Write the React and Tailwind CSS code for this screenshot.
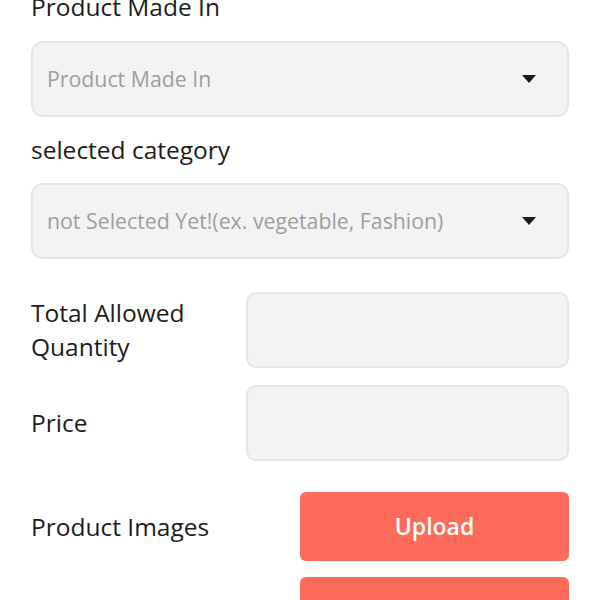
import React from "react";

function Caret() {
  return (
    <svg width="14" height="8" viewBox="0 0 14 8" className="shrink-0">
      <path d="M0 0 H14 L7 8 Z" fill="#1a1a1a" />
    </svg>
  );
}

function Select({ text }) {
  return (
    <div className="flex h-[76px] items-center justify-between rounded-[12px] border-2 border-[#e6e6e6] bg-[#f3f3f3] pl-[14px] pr-[31px]">
      <span className="text-[21.3px] text-[#9e9e9e]">{text}</span>
      <Caret />
    </div>
  );
}

export default function App() {
  return (
    <div
      className="min-h-[600px] bg-white px-[31px] text-[#1c1c1c]"
      style={{ fontFamily: '"Open Sans", "Noto Sans", sans-serif' }}
    >
      <div className="-mt-[10px] text-[24.5px] leading-[34px]">Product Made In</div>
      <div className="mt-[17px]">
        <Select text="Product Made In" />
      </div>
      <div className="mt-[16px] text-[24.5px] leading-[34px]">selected category</div>
      <div className="mt-[16px]">
        <Select text="not Selected Yet!(ex. vegetable, Fashion)" />
      </div>

      <div className="mt-[33px] flex items-center">
        <div className="w-[215px] text-[24.5px] leading-[34px]">
          Total Allowed
          <br />
          Quantity
        </div>
        <div className="h-[76px] flex-1 rounded-[10px] border-2 border-[#e6e6e6] bg-[#f3f3f3]" />
      </div>
      <div className="mt-[17px] flex items-center">
        <div className="w-[215px] text-[24.5px] leading-[34px]">Price</div>
        <div className="h-[76px] flex-1 rounded-[10px] border-2 border-[#e6e6e6] bg-[#f3f3f3]" />
      </div>

      <div className="mt-[31px] flex items-center">
        <div className="w-[269px] text-[24.5px] leading-[34px]">Product Images</div>
        <button className="flex h-[69px] flex-1 items-center justify-center rounded-[6px] bg-[#ff6b5a] text-[23px] font-semibold text-white">
          Upload
        </button>
      </div>
      <div className="mt-[16px] flex">
        <div className="w-[269px]" />
        <button className="h-[69px] flex-1 rounded-[6px] bg-[#ff6b5a]" />
      </div>
    </div>
  );
}
